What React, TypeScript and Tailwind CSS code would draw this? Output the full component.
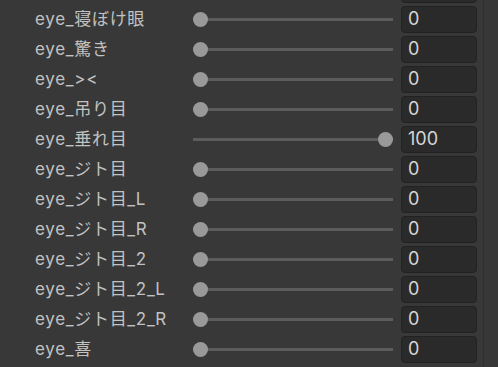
import React from "react";

const rows: { label: string; value: number | null }[] = [
  { label: "", value: null },
  { label: "eye_寝ぼけ眼", value: 0 },
  { label: "eye_驚き", value: 0 },
  { label: "eye_><", value: 0 },
  { label: "eye_吊り目", value: 0 },
  { label: "eye_垂れ目", value: 100 },
  { label: "eye_ジト目", value: 0 },
  { label: "eye_ジト目_L", value: 0 },
  { label: "eye_ジト目_R", value: 0 },
  { label: "eye_ジト目_2", value: 0 },
  { label: "eye_ジト目_2_L", value: 0 },
  { label: "eye_ジト目_2_R", value: 0 },
  { label: "eye_喜", value: 0 },
];

function Row({ label, value }: { label: string; value: number | null }) {
  const pos = ((value ?? 0) / 100) * (200 - 15);
  return (
    <div className="flex h-[30px] shrink-0 items-center">
      <div className="w-[193px] pl-[35px] shrink-0 whitespace-nowrap text-[17px] leading-none text-[#c2c2c2] tracking-[0.7px]">
        {label}
      </div>
      <div className="relative h-[16px] w-[200px] shrink-0">
        <div className="absolute left-0 right-0 top-[6.5px] h-[3px] bg-[#5c5c5c]" />
        <div
          className="absolute top-[0.5px] h-[15px] w-[15px] rounded-full bg-[#999999]"
          style={{ left: pos }}
        />
      </div>
      <div className="ml-[8px] flex h-[27px] w-[76px] shrink-0 items-center rounded-[4px] border border-[#222222] bg-[#2a2a2a] pl-[6px] text-[18px] leading-none text-[#d6d6d6]">
        {value}
      </div>
    </div>
  );
}

export default function App() {
  return (
    <div
      className="flex h-[367px] w-[498px] overflow-hidden bg-[#383838]"
      style={{ fontFamily: "Inter, 'Noto Sans CJK JP', sans-serif" }}
    >
      <div className="-mt-[26px] flex w-[483px] shrink-0 flex-col">
        {rows.map((r, i) => (
          <Row key={i} label={r.label} value={r.value} />
        ))}
      </div>
      <div className="w-[1px] shrink-0 bg-[#303030]" />
      <div className="flex-1 bg-[#373737]" />
    </div>
  );
}
